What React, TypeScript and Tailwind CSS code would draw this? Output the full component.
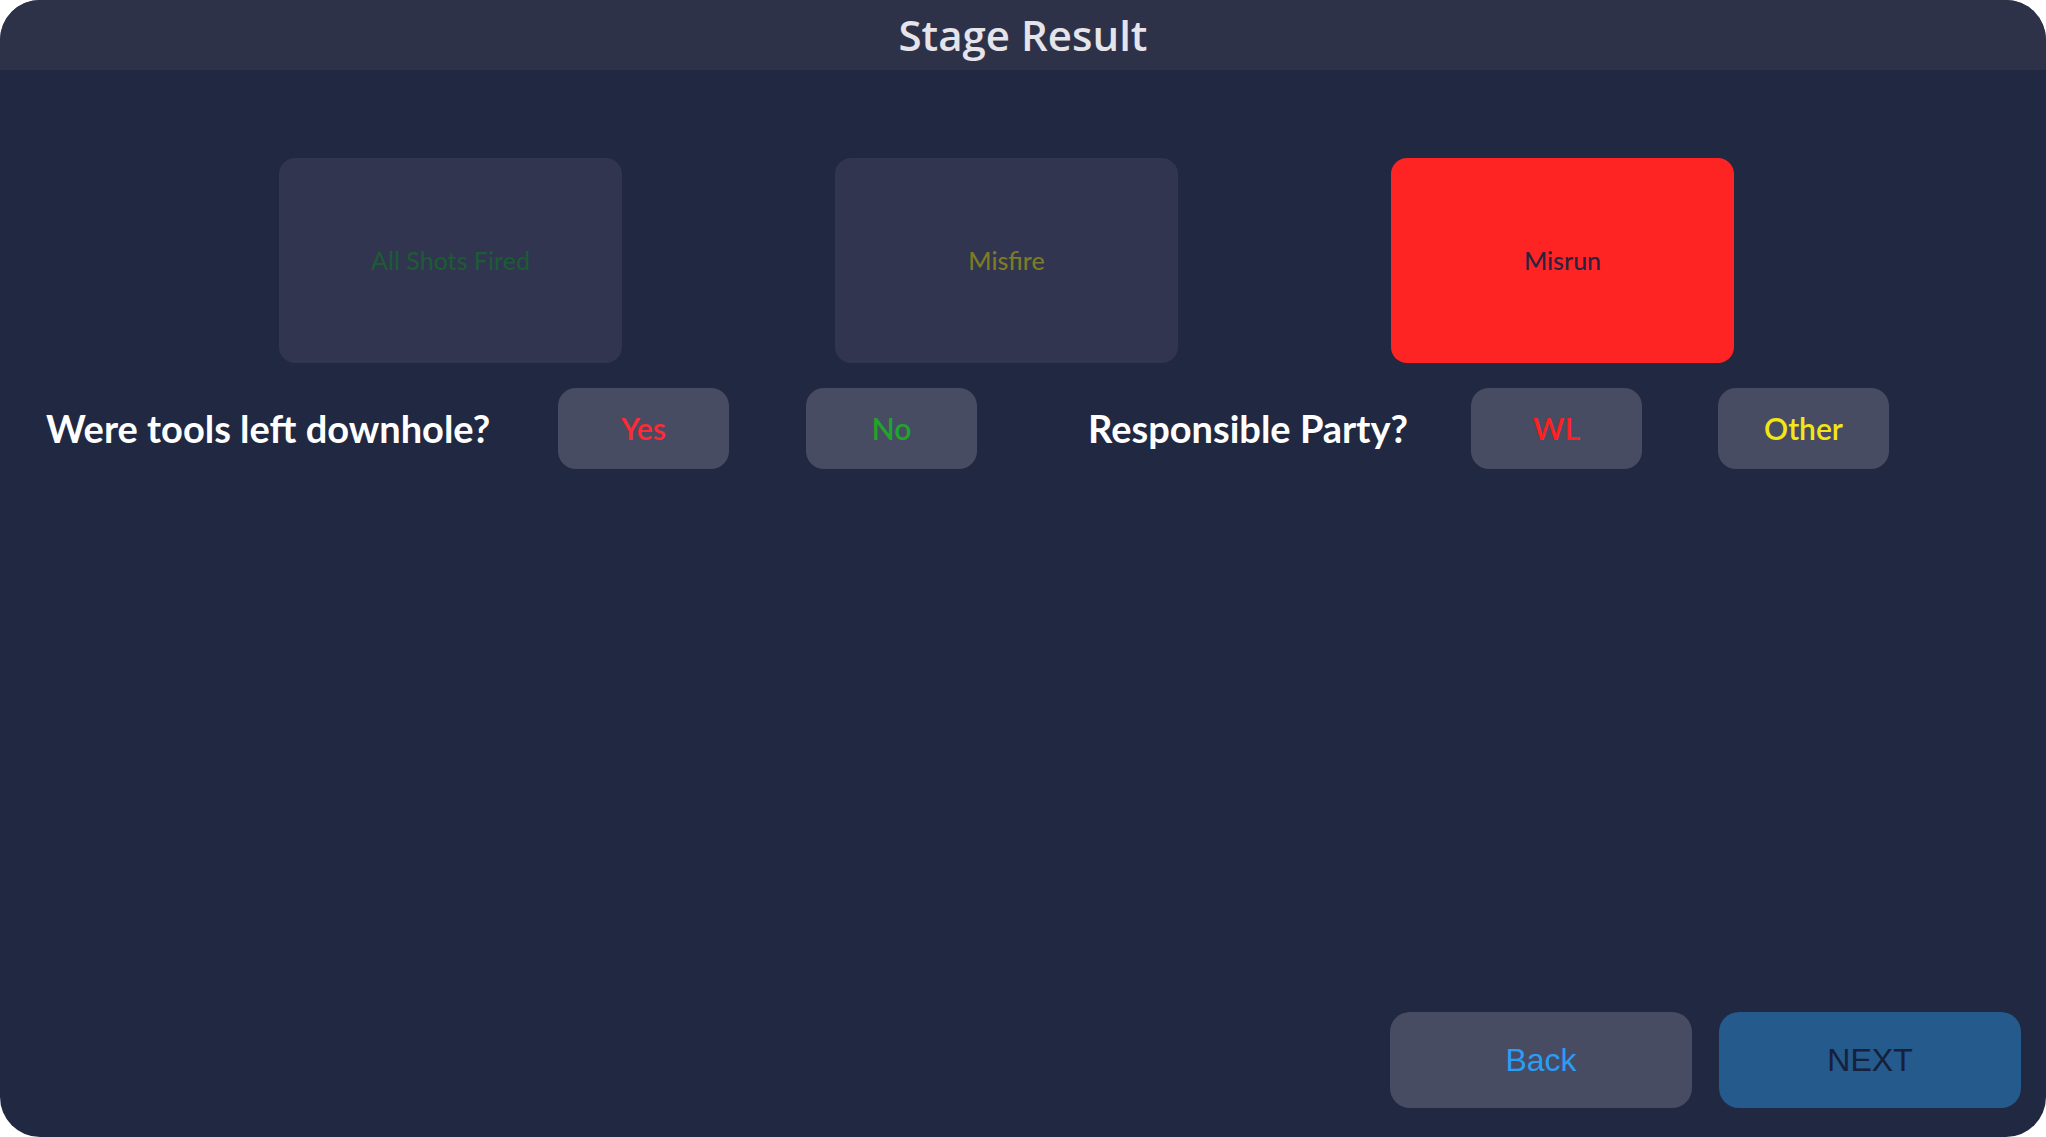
const CARDS = [
  { key: 'all', label: 'All Shots Fired', bg: 'bg-[#31354f]', text: 'text-[#1d5a35]' },
  { key: 'misfire', label: 'Misfire', bg: 'bg-[#31354f]', text: 'text-[#7d7b25]' },
  { key: 'misrun', label: 'Misrun', bg: 'bg-[#ff2424]', text: 'text-[#2a2340]' },
];

function Pill({ label, color, className = '' }: { label: string; color: string; className?: string }) {
  return (
    <button
      className={`h-[81px] w-[171px] shrink-0 rounded-[18px] bg-[#484c63] text-[30px] font-semibold ${color} ${className}`}
      style={{ fontFamily: 'Lato, "Open Sans", sans-serif' }}
    >
      {label}
    </button>
  );
}

export default function App() {
  return (
    <div className="bg-white w-[2046px] h-[1137px]">
      <div className="flex flex-col h-full rounded-[40px] overflow-hidden bg-[#212842]">
        <div className="h-[70px] shrink-0 bg-[#2e3248] flex items-center justify-center">
          <h1
            className="text-[42px] font-semibold text-[#e4e4ea] leading-none"
            style={{ fontFamily: '"Open Sans", "Noto Sans", sans-serif' }}
          >
            Stage Result
          </h1>
        </div>

        <div className="flex gap-[213px] pl-[279px] mt-[88px]">
          {CARDS.map(c => (
            <button
              key={c.key}
              className={`w-[343px] h-[205px] rounded-[16px] flex items-center justify-center text-[25px] font-medium ${c.bg} ${c.text}`}
              style={{ fontFamily: 'Lato, "Open Sans", sans-serif' }}
            >
              {c.label}
            </button>
          ))}
        </div>

        <div className="flex items-center pl-[46px] mt-[25px]" style={{ fontFamily: 'Lato, "Open Sans", sans-serif' }}>
          <div className="w-[512px] shrink-0 text-[38px] font-bold text-white">Were tools left downhole?</div>
          <Pill label="Yes" color="text-[#ff2a35]" />
          <Pill label="No" color="text-[#1ea52a]" className="ml-[77px]" />
          <div className="w-[383px] shrink-0 ml-[111px] text-[38px] font-bold text-white">Responsible Party?</div>
          <Pill label="WL" color="text-[#ff2020]" />
          <Pill label="Other" color="text-[#f2e614]" className="ml-[76px]" />
        </div>

        <div
          className="mt-auto flex justify-end gap-[27px] pr-[25px] pb-[29px]"
          style={{ fontFamily: '"Liberation Sans", Arial, sans-serif' }}
        >
          <button className="w-[302px] h-[96px] rounded-[20px] bg-[#484c63] text-[32px] text-[#2a9df4]">Back</button>
          <button className="w-[302px] h-[96px] rounded-[20px] bg-[#245a8c] text-[32px] text-[#17203a]">NEXT</button>
        </div>
      </div>
    </div>
  );
}
